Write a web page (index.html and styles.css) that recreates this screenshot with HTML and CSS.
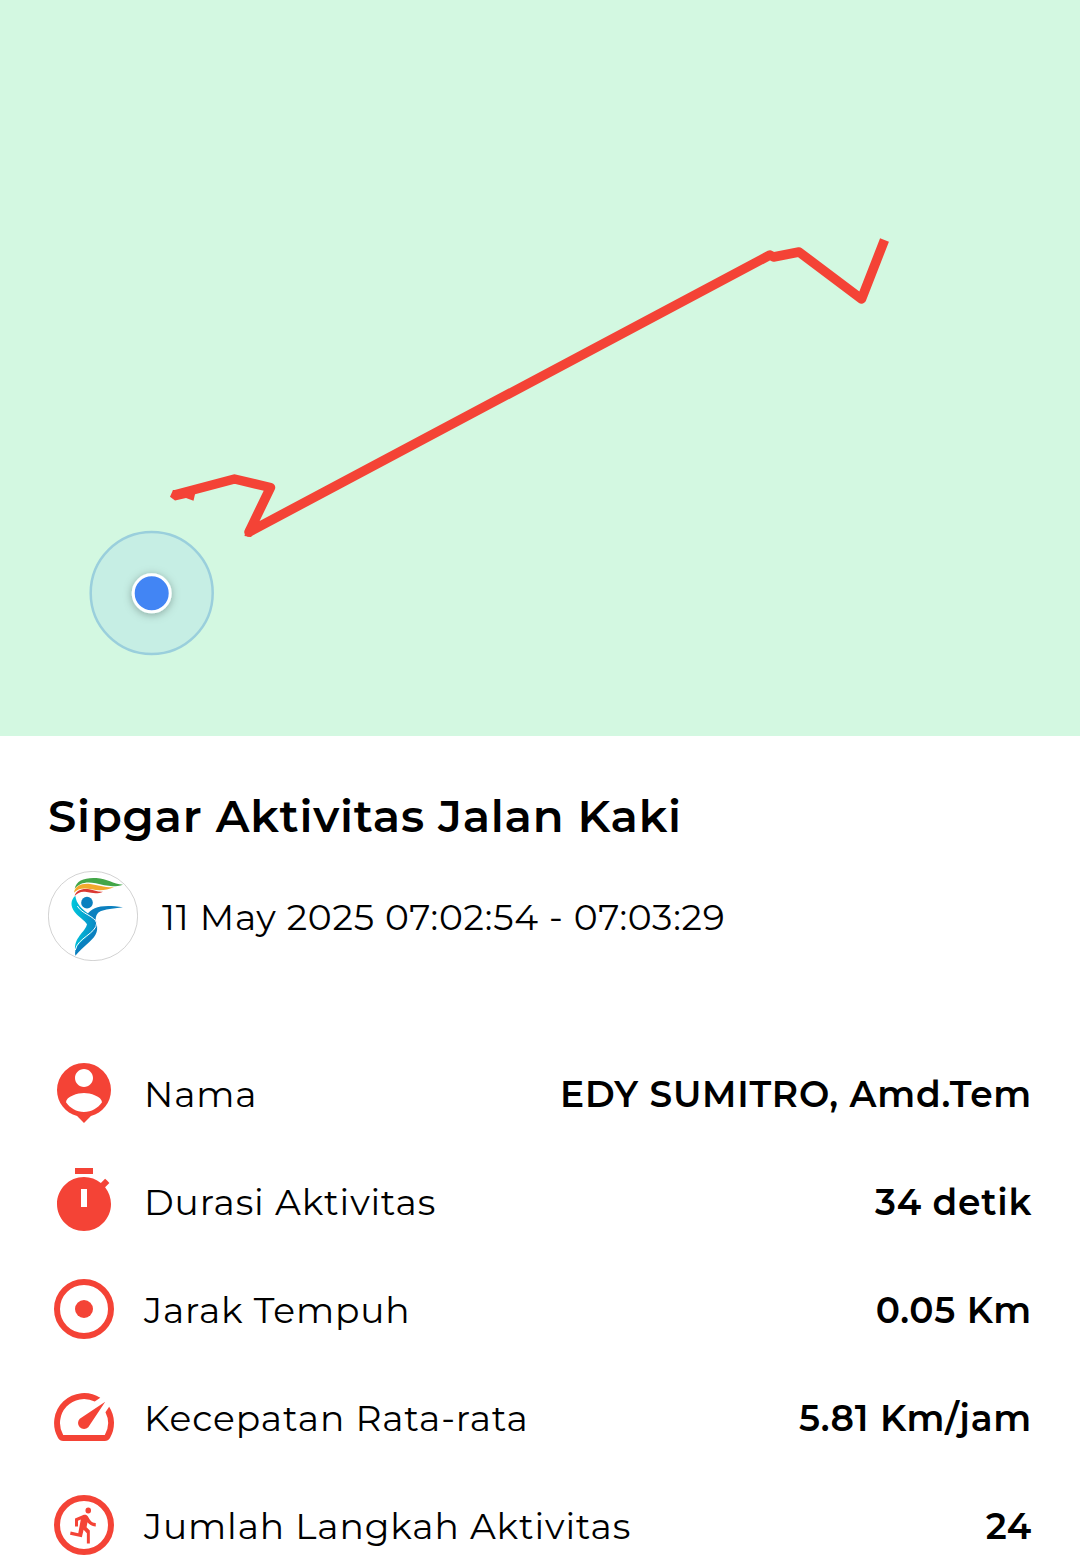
FILE: index.html
```
<!DOCTYPE html>
<html lang="id">
<head>
  <meta charset="UTF-8" />
  <meta name="viewport" content="width=device-width, initial-scale=1" />
  <title>Sipgar Aktivitas Jalan Kaki</title>
  <link rel="stylesheet" href="styles.css">
</head>
<body>
  <!-- Map with the walked route -->
  <svg class="map" viewBox="0 0 1080 736">
    <defs>
      <filter id="dot-shadow" x="-50%" y="-50%" width="200%" height="200%">
        <feDropShadow dx="0" dy="1.5" stdDeviation="4" flood-color="#000" flood-opacity="0.3" />
      </filter>
    </defs>
    <polyline class="route" points="174,495 234.5,479 270.5,487.5 249,532 770,255 773.5,257 799,252 861.5,299 884.5,240" />
    <polygon class="route-end" points="170,496.7 173,490 196,490 193.5,500.7 186,498 175,500.5" />
    <polygon class="route-end" points="246,528 244.5,536 251,537 254,533" />
    <circle class="accuracy" cx="151.7" cy="593" r="61" />
    <circle class="dot" cx="151.7" cy="593.3" r="18.5" filter="url(#dot-shadow)" />
  </svg>

  <div class="details">
    <h1>Sipgar Aktivitas Jalan Kaki</h1>

    <div class="time">
      <svg class="logo" viewBox="24 18 270 270">
        <defs>
          <linearGradient id="body-color" x1="0" y1="0" x2="1" y2="0">
            <stop offset="0" stop-color="#00c8dc" />
            <stop offset="1" stop-color="#0a86c4" />
          </linearGradient>
        </defs>
        <circle class="logo-ring" cx="159" cy="153" r="134" />
        <path fill="#43a648" d="M104 71C109 47 133 37 169 39C202 41 219 57 249 59C219 68 195 62 167 55C138 49 119 54 104 71Z" />
        <path fill="#f2a92c" d="M102 83C105 64 124 54 150 57C176 60 192 68 222 67C199 76 179 78 155 73C128 67 113 72 102 83Z" />
        <path fill="#db3832" d="M104 93C107 77 127 69 148 73C163 76 172 81 189 80C175 87 157 85 140 81C124 78 113 83 104 93Z" />
        <circle cx="141" cy="113" r="17.5" fill="#0b80bf" />
        <path fill="#0b80bf" d="M141 149C157 126 186 117 249 127C225 130 203 132 186 137C173 141 168 149 167 164Z" />
        <path fill="url(#body-color)" d="M106 92C92 104 90 123 104 141C117 158 135 166 141 178C137 200 99 220 106 258C116 231 166 213 170 179C174 151 111 140 106 92Z" />
        <path fill="#0b80bf" d="M166 162C178 197 170 211 148 231C130 247 119 257 106 272C102 249 116 237 135 222C159 203 172 193 166 162Z" />
        <path class="logo-line" d="M112 123C125 147 164 153 170 174C170 205 112 219 106 255" />
      </svg>
      <span class="date">11 May 2025 07:02:54 - 07:03:29</span>
    </div>

    <div class="stats">
      <div class="row">
        <svg class="icon" viewBox="0 0 24 24"><path d="M12 2a9 9 0 0 0-9 9c0 4.17 2.84 7.67 6.69 8.69L12 22l2.31-2.31C18.16 18.67 21 15.17 21 11a9 9 0 0 0-9-9zm0 2c1.66 0 3 1.34 3 3s-1.34 3-3 3-3-1.34-3-3 1.34-3 3-3zm0 14.3c-2.5 0-4.71-1.28-6-3.22.03-1.99 4-3.08 6-3.08s5.97 1.09 6 3.08c-1.29 1.94-3.5 3.22-6 3.22z" /></svg>
        <span class="label">Nama</span>
        <span class="value">EDY SUMITRO, Amd.Tem</span>
      </div>
      <div class="row">
        <svg class="icon" viewBox="0 0 24 24"><path fill-rule="evenodd" d="M15 1H9v2h6V1zm-4 13h2V8h-2v6zm8.03-6.61l1.42-1.42c-.43-.51-.9-.99-1.41-1.41l-1.42 1.42C16.07 4.74 14.12 4 12 4c-4.97 0-9 4.03-9 9s4.02 9 9 9 9-4.03 9-9c0-2.12-.74-4.07-1.97-5.61z" /></svg>
        <span class="label">Durasi Aktivitas</span>
        <span class="value">34 detik</span>
      </div>
      <div class="row">
        <svg class="icon" viewBox="0 0 24 24"><circle class="ring" cx="12" cy="12" r="9" /><circle cx="12" cy="12" r="3" /></svg>
        <span class="label">Jarak Tempuh</span>
        <span class="value">0.05 Km</span>
      </div>
      <div class="row">
        <svg class="icon" viewBox="0 0 24 24"><path d="M20.38 8.57l-1.23 1.85a8 8 0 0 1-.22 7.58H5.07A8 8 0 0 1 15.58 6.85l1.85-1.23A10 10 0 0 0 3.35 19a2 2 0 0 0 1.72 1h13.85a2 2 0 0 0 1.74-1 10 10 0 0 0-.27-10.44zm-9.79 6.84a2 2 0 0 0 2.83 0l5.66-8.49-8.49 5.66a2 2 0 0 0 0 2.83z" /></svg>
        <span class="label">Kecepatan Rata-rata</span>
        <span class="value">5.81 Km/jam</span>
      </div>
      <div class="row">
        <svg class="icon" viewBox="0 0 24 24"><circle class="ring" cx="12" cy="12" r="9" /><path transform="translate(6.3 5.2) scale(.52 .56)" d="M15.49 3.48a1.8 1.8 0 1 1-3.6 0 1.8 1.8 0 1 1 3.6 0zM9.6 19.38l1.1-4.4 2.1 2v6.2h1.9v-7.7l-2.1-2 .6-3c1.3 1.5 3.1 2.5 5.3 2.5v-2c-1.9 0-3.3-1-4.1-2.4l-1-1.6c-.4-.6-1-1-1.7-1-.3 0-.5.1-.8.1L5.2 8.28v4.7h1.9v-3.4l1.8-.7-1.6 8.1-4.9-1-.4 2 7.6 1.4z" /></svg>
        <span class="label">Jumlah Langkah Aktivitas</span>
        <span class="value">24</span>
      </div>
    </div>
  </div>
</body>
</html>
```
FILE: styles.css
```
body {
  margin: 0;
  height: 1560px;
  overflow: hidden;
  background: #fff;
  color: #000;
  font-family: Montserrat, Inter, sans-serif;
}

.map {
  display: block;
  width: 100%;
  height: 736px;
  background: #d3f8e1;
}

.route {
  fill: none;
  stroke: #f44336;
  stroke-width: 9.5px;
  stroke-linejoin: round;
}

.route-end {
  fill: #f44336;
}

.accuracy {
  fill: #c6eee4;
  stroke: #9acfdc;
  stroke-width: 2.5px;
}

.dot {
  fill: #4285f4;
  stroke: #fff;
  stroke-width: 3px;
}

.details {
  padding: 53px 48px 0;
}

h1 {
  margin: 0 0 28px;
  font-size: 45px;
  font-weight: 600;
  line-height: 54px;
  letter-spacing: 0.8px;
  white-space: nowrap;
}

.time {
  display: flex;
  align-items: center;
  gap: 24px;
}

.logo {
  width: 90px;
  height: 90px;
}

.logo-ring {
  fill: #fff;
  stroke: #bbb;
  stroke-width: 2px;
}

.logo-line {
  fill: none;
  stroke: #fff;
  stroke-width: 3px;
}

.date {
  padding-top: 1px;
  font-size: 36px;
  letter-spacing: 0.77px;
}

.stats {
  display: flex;
  flex-direction: column;
  gap: 36px;
  margin-top: 96px;
}

.row {
  display: flex;
  align-items: center;
  height: 72px;
  font-size: 36px;
  letter-spacing: 0.75px;
  white-space: nowrap;
}

.icon {
  width: 72px;
  height: 72px;
  margin-right: 24px;
  fill: #f44336;
}

.ring {
  fill: none;
  stroke: #f44336;
  stroke-width: 2px;
}

.label {
  padding-top: 1px;
  letter-spacing: 0.88px;
}

.value {
  margin-left: auto;
  padding-top: 1px;
  font-weight: 600;
}
```
